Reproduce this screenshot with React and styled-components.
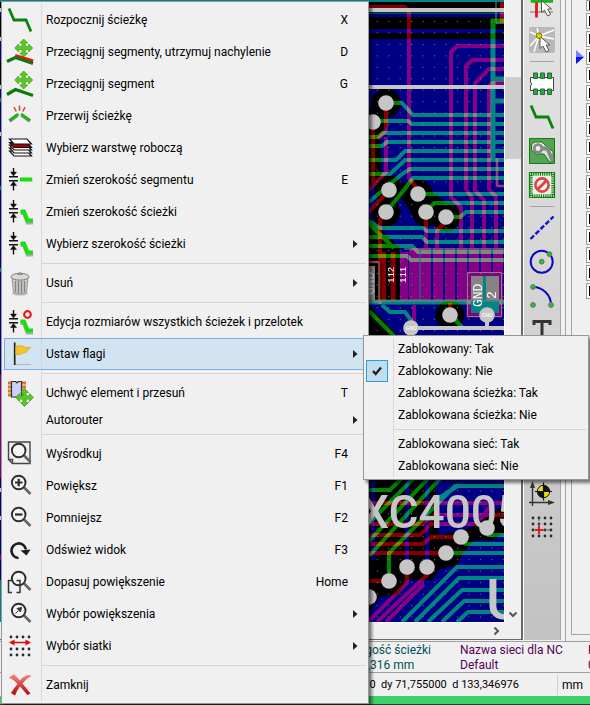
import React from "react";
import styled, { createGlobalStyle } from "styled-components";

const GlobalStyle = createGlobalStyle`
  * { box-sizing: border-box; }
  body { margin: 0; background: #f0f0f0; }
  button { font: inherit; color: inherit; border: 0; background: none; padding: 0; text-align: left; }
  svg { display: block; flex: none; }
`;

const Window = styled.div`
  position: relative;
  display: flex;
  flex-direction: column;
  min-height: 100vh;
  overflow: hidden;
  background: #f0f0f0;
  color: #000;
  font: 12px/16px Roboto, "Open Sans", sans-serif;
`;

const Workspace = styled.main`
  flex: 1;
  display: flex;
  min-height: 0;
`;

const CanvasFrame = styled.section`
  flex: 1;
  min-width: 0;
  display: grid;
  grid-template-columns: 1fr 17px;
  grid-template-rows: 1fr 17px;
  border-right: 2px solid #696969;
  border-bottom: 1px solid #696969;
  margin-bottom: 1px;
`;

const BoardArea = styled.div`
  min-width: 0;
  min-height: 0;
  overflow: hidden;
  contain: size;
  background: #000084;
  svg { width: 100%; height: 100%; isolation: isolate; }
`;

const CopperLayer = styled.g`
  fill: none;
  stroke: ${(p) => p.$color};
  stroke-width: 4;
  mix-blend-mode: lighten;
`;

const Silk = styled.text`
  fill: ${(p) => p.$color || "#c6c6c6"};
  font-family: ${(p) => (p.$large ? 'Roboto, "Liberation Sans", sans-serif' : '"Liberation Mono", monospace')};
  font-weight: ${(p) => (p.$large ? 500 : 400)};
  font-size: ${(p) => p.$size}px;
`;

const ScrollTrack = styled.div`
  display: flex;
  flex-direction: ${(p) => (p.$vertical ? "column" : "row")};
  justify-content: flex-end;
  background: #f0f0f0;
  border-left: ${(p) => (p.$vertical ? "1px solid #fff" : "0")};
  border-top: ${(p) => (p.$vertical ? "0" : "1px solid #fff")};
`;

const ScrollThumb = styled.div`
  height: 82px;
  margin: 77px 0 auto;
  background: #cdcdcd;
`;

const ScrollButton = styled.button`
  display: grid;
  place-items: center;
  width: 16px;
  height: 16px;
`;

const ToolColumn = styled.nav`
  width: 38px;
  overflow: hidden;
  contain: size;
  border-left: 1px solid #fff;
  border-right: 1px solid #a8a8a8;
  background: linear-gradient(#e4e4e4, #c2c2c2);
  margin-bottom: 1px;
`;

const ToolList = styled.div`
  display: flex;
  flex-direction: column;
  align-items: center;
  margin-top: -11px;
`;

const ToolButton = styled.button`
  display: grid;
  place-items: center;
  width: 36px;
  height: 34px;
`;

const ToolRule = styled.hr`
  width: 24px;
  height: 1px;
  margin: 4px 0;
  border: 0;
  background: #a3a3a3;
`;

const LayerDock = styled.aside`
  width: 25px;
  padding: 0 0 6px 5px;
  margin-left: 4px;
  border-left: 1px solid #a5a5a5;
  display: flex;
  overflow: hidden;
  contain: size;
`;

const LayerList = styled.div`
  flex: 1;
  display: flex;
  flex-direction: column;
  gap: 2px;
  border: solid #a5a5a5;
  border-width: 0 0 1px 1px;
`;

const LayerRow = styled.div`
  display: flex;
  justify-content: flex-end;
  align-items: center;
  height: ${(p) => (p.$clipped ? 11 : 16)}px;
`;

const LayerSwatch = styled.button`
  width: 4px;
  height: 100%;
  margin-left: 2px;
  border: solid #9c9c9c;
  border-width: 1px 0 1px 1px;
  background: linear-gradient(#000, #000) 2px 50% / 2px 10px no-repeat #fff;
`;

const MessagePanel = styled.section`
  display: grid;
  grid-template-columns: 1fr 128px 2px;
  height: 31px;
  padding-top: 1px;
  border-top: 1px solid #a0a0a0;
  overflow: hidden;
  line-height: 15px;
  white-space: nowrap;
`;

const Message = styled.div`
  color: ${(p) => p.$color};
  justify-self: ${(p) => (p.$end ? "end" : "start")};
  margin-right: ${(p) => (p.$end ? 29 : 0)}px;
`;

const StatusBar = styled.footer`
  display: flex;
  align-items: center;
  height: 24px;
  border-top: 1px solid #a0a0a0;
  white-space: pre;
`;

const Coordinates = styled.div`
  flex: 1;
  font-size: 11px;
  text-align: right;
  padding-right: 38px;
`;

const Units = styled.div`
  width: 33px;
  padding-left: 4px;
  line-height: 20px;
  border-left: 1px solid #d0d0d0;
`;

const WindowEdge = styled.div`
  height: 9px;
  background: #3dd168;
  border-bottom: 1px solid #10492a;
`;

const MenuBox = styled.div`
  position: absolute;
  display: flex;
  flex-direction: column;
  padding: 2px;
  border: 1px solid #979797;
  background: linear-gradient(#d9d9d9, #d9d9d9) ${(p) => p.$rule}px 2px / 1px calc(100% - 4px) no-repeat #f0f0f0;
  box-shadow: 3px 3px 3px rgba(0, 0, 0, 0.5);
  white-space: nowrap;
`;

const ContextMenu = styled(MenuBox)`
  left: 1px;
  top: 1px;
  min-width: 368px;
`;

const SubMenu = styled(MenuBox)`
  left: calc(100% - 3px);
  top: -3px;
  min-width: 226px;
`;

const ItemSlot = styled.div`
  position: relative;
`;

const MenuItem = styled.button`
  display: flex;
  align-items: center;
  width: 100%;
  height: ${(p) => (p.$compact ? 22 : 32)}px;
  padding-right: 8px;
  background: ${(p) => (p.$active ? "rgba(180, 215, 243, 0.5)" : "transparent")};
  box-shadow: ${(p) => (p.$active ? "inset 0 0 0 1px #78aee5" : "none")};
`;

const IconCell = styled.span`
  flex: none;
  width: 42px;
  padding-left: 2px;
`;

const ItemLabel = styled.span`
  flex: 1;
`;

const Shortcut = styled.span`
  margin-right: 10px;
`;

const CheckCell = styled.span`
  flex: none;
  display: grid;
  place-items: center;
  width: 22px;
  height: 22px;
  margin-right: 10px;
  border: ${(p) => (p.$checked ? "1px solid #26a0da" : "0")};
  background: ${(p) => (p.$checked ? "#c0dded" : "none")};
`;

const MenuRule = styled.hr`
  height: 1px;
  margin: 3px 0 3px ${(p) => p.$inset}px;
  border: 0;
  background: #d4d4d4;
`;

const Icon = ({ children }) => (
  <svg width="28" height="28" viewBox="0 0 28 28" fill="none" aria-hidden="true">
    {children}
  </svg>
);

const MoveCross = ({ x, y }) => (
  <g transform={`translate(${x} ${y})`}>
    <path
      d="M0-9 4-5H1.600V-1.600H5V-4L9 0 5 4V1.600H1.600V5H4L0 9-4 5H-1.600V1.600H-5V4L-9 0-5-4V-1.600H-1.600V-5H-4Z"
      fill="#55cc22"
      stroke="#3e9a1c"
      strokeWidth=".7"
    />
  </g>
);

const WidthMark = () => (
  <g stroke="#111" strokeWidth="1.400">
    <path d="M3 10.700H12M3 14.700H12M7.500 2V8M7.500 17V24.500" />
    <path d="M4.500 6H10.500L7.500 10ZM4.500 19.500H10.500L7.500 15.500Z" fill="#111" strokeWidth=".5" />
  </g>
);

const BentTrack = () => (
  <>
    <path d="M14.500 15H18L21.500 24.500H27" stroke="#aaa" strokeWidth="4" />
    <path d="M14.500 13.500H18L21.500 22.500H27" stroke="#18e010" strokeWidth="4" />
  </>
);

const Lens = ({ y = 10.5 }) => (
  <>
    <path d={`M18 ${y + 5} 24.500 ${y + 11.5}`} stroke="#666" strokeWidth="2.600" />
    <circle cx="12.700" cy={y} r="6.800" stroke="#2c2c2c" strokeWidth="1.900" fill="#f4f4f4" />
  </>
);

const Dots = ({ rows }) => (
  <path
    d={rows.map((y) => `M5 ${y}h0M11 ${y}h0M17 ${y}h0M23 ${y}h0`).join("")}
    stroke="#2b2b2b"
    strokeWidth="2.800"
    strokeLinecap="round"
  />
);

const Pointer = ({ x, y }) => (
  <path transform={`translate(${x} ${y})`} d="M0 0V12L3 9.500 6 15.500 9 14 6.200 8.500H10Z" fill="#fff" stroke="#555" />
);

const icons = {
  track: <path d="M3 2.500 8 14H20L25 25.500" stroke="#0b820b" strokeWidth="2.800" />,
  dragSlope: (
    <>
      <MoveCross x={17.7} y={10} />
      <path d="M9 18 27 23.500" stroke="#f5101a" strokeWidth="4" />
      <path d="M1 23.500 9.500 19.500 27 25.500" stroke="#0a7a0a" strokeWidth="3.200" />
    </>
  ),
  drag: (
    <>
      <MoveCross x={17.7} y={10} />
      <path d="M1 24.500 9.500 19.500 27 25.500" stroke="#0a7a0a" strokeWidth="3.200" />
    </>
  ),
  breakTrack: (
    <>
      <path d="M3.500 19 11.500 13M24 19 15.500 13" stroke="#888" strokeWidth="3.600" />
      <path d="M3.500 18.500 12.500 12M24 18.500 15 12" stroke="#12bb12" strokeWidth="2.600" />
      <path d="M13.500 3.500V8.700M8 5 10.200 9.500M19 5 16.800 9.500" stroke="#d04848" strokeWidth="1.600" />
    </>
  ),
  layers: (
    <g stroke="#111" strokeWidth="1.200">
      {[17, 14, 11].map((y) => (
        <path key={y} d={`M3.500 ${y}H21L25.500 ${y + 5}H8Z`} fill="#fff" />
      ))}
      <path d="M3.500 8.500H21L25.500 13.500H8Z" fill="#a80000" />
      <path d="M3.500 5H21L25.500 10H8Z" fill="#fff" />
    </g>
  ),
  segmentWidth: (
    <>
      <WidthMark />
      <path d="M14 13.500H26.300" stroke="#18e010" strokeWidth="4" />
    </>
  ),
  trackWidth: (
    <>
      <WidthMark />
      <BentTrack />
    </>
  ),
  trash: (
    <>
      <ellipse cx="14" cy="24.500" rx="8" ry="2" fill="#bbb" />
      <path d="M6 9 7.500 23.500Q14 26.500 20.500 23.500L22 9Z" fill="#c9c9c4" stroke="#8c8c88" strokeWidth=".8" />
      <path d="M9.500 12V23M12.500 12V24M15.500 12V24M18.500 12V23" stroke="#83837f" strokeWidth="1.300" />
      <ellipse cx="14" cy="7.700" rx="9" ry="3.400" fill="#d8d8d4" stroke="#80807c" />
      <path d="M11.500 5.500Q14 1.500 16.500 5.500Z" fill="#aaa" stroke="#777" strokeWidth=".7" />
    </>
  ),
  editAll: (
    <>
      <WidthMark />
      <BentTrack />
      <circle cx="21.500" cy="6.500" r="3.300" stroke="#f01414" strokeWidth="2.200" fill="#fff" />
    </>
  ),
  flag: (
    <>
      <path d="M9 24.500H25" stroke="#b5bcc4" strokeWidth="1.200" />
      <path d="M8.700 2.500V25" stroke="#222" strokeWidth="1.700" />
      <path d="M9.700 6.500Q13 4.500 17 6.500T24.700 7.500Q22 9 20 12.500 17 12 15 14 12 15 9.700 14.500Z" fill="#f2c52c" stroke="#d0a018" strokeWidth=".7" />
    </>
  ),
  moveChip: (
    <>
      <path d="M2 4H20M2 8H20M2 12H20M2 16H20" stroke="#d87920" strokeWidth="3" />
      <path d="M5.500 2.500H9.500L11 4 12.500 2.500H15.500V18H5.500Z" fill="#cdd0ff" stroke="#333" strokeWidth="1.200" />
      <MoveCross x={18.5} y={18.5} />
    </>
  ),
  center: (
    <>
      <path d="M2.500 2H24V23.500H6.500L2.500 19.500ZM2.500 19.500H6.500V23.500" stroke="#444" strokeWidth="1.400" />
      <Lens />
    </>
  ),
  zoomIn: (
    <>
      <Lens />
      <path d="M9 10.500H16.500M12.700 6.700V14.300" stroke="#2c2c2c" strokeWidth="2.200" />
    </>
  ),
  zoomOut: (
    <>
      <Lens />
      <path d="M9 10.500H16.500" stroke="#2c2c2c" strokeWidth="2.200" />
    </>
  ),
  refresh: (
    <>
      <path d="M12.500 22A7.300 7.300 0 1 1 20 13.500" stroke="#1c1c1c" strokeWidth="2.600" />
      <path d="M14.500 14.500 24.500 13.500 20.500 19.500Z" fill="#1c1c1c" />
    </>
  ),
  fit: (
    <>
      <Lens />
      <path d="M6 12.500H2.500V24.500H6M10.500 12.500H14V24.500H10.500" stroke="#333" strokeWidth="1.500" />
    </>
  ),
  zoomPick: (
    <>
      <Lens />
      <path d="M9.500 13.500 12 11M11 8.500 15.500 7.500 14.500 12Z" fill="#333" stroke="#333" />
    </>
  ),
  gridPick: (
    <>
      <Dots rows={[5, 17, 23]} />
      <path d="M6 10.500H22" stroke="#e00808" strokeWidth="1.500" />
      <path d="M3 10.500 8.500 7.500V13.500ZM25 10.500 19.500 7.500V13.500Z" fill="#e00808" />
    </>
  ),
  close: (
    <>
      <defs>
        <linearGradient id="closeRed" x1="0" y1="0" x2="0" y2="1">
          <stop offset="0" stopColor="#f28d84" />
          <stop offset="1" stopColor="#b00505" />
        </linearGradient>
      </defs>
      <path d="M3 6.500 8 3 14 9.500Q18 4 23.500 4L25.500 5Q20 7.500 16.500 12.500L24.500 22.500 21.500 24 14 15.500Q10.500 20 9 24.500L5 22Q8 17 11.500 13Q8 8.500 3 6.500Z" fill="url(#closeRed)" />
    </>
  ),
  select: (
    <>
      <path d="M2.700 9H25" stroke="#15b515" strokeWidth="3.500" />
      <path d="M2 20H25" stroke="#aaa" strokeWidth="2" />
      <path d="M8.500 10V25.500" stroke="#e01818" strokeWidth="2.800" />
      <Pointer x={13.5} y={8.5} />
    </>
  ),
  highlightNet: (
    <>
      <rect x="1" y="1" width="26" height="26" rx="2" fill="#b9b9b9" />
      <path d="M11 10 2 6M11 10 6 26M11 10 26 4M11 10 26 13M11 10 2 20M11 10 9 2" stroke="#fff" strokeWidth="1.400" />
      <Pointer x={12} y={10.5} />
      <circle cx="11" cy="9.700" r="2.800" fill="#d5d500" stroke="#777700" />
    </>
  ),
  module: (
    <>
      <path d="M2.500 8.500H25.500V21.500H2.500V17Q5 15.500 2.500 13Z" fill="#fff" stroke="#444" />
      <path
        d="M5.500 4h4v5.500h-4ZM12.500 4h4v5.500h-4ZM19.500 4h4v5.500h-4ZM5.500 20h4v5.500h-4ZM12.500 20h4v5.500h-4ZM19.500 20h4v5.500h-4Z"
        fill="#19b832"
        stroke="#3a5c40"
      />
    </>
  ),
  zone: (
    <>
      <path d="M1.500 1.500H26.500V26.500H1.500Z" fill="#52a552" stroke="#157a15" />
      <path d="M6 5H14L18 9 25 14.500V24L22 25.500 16 17H8L3.500 13V8Z" fill="#d5e8d5" stroke="#157a15" />
      <path d="M11 11.500H19.500L24.500 24" stroke="#888" strokeWidth="3.800" />
      <circle cx="10" cy="11.500" r="3.800" stroke="#888" strokeWidth="2.800" fill="#eee" />
    </>
  ),
  keepout: (
    <>
      <path d="M3 3H25V25H3Z" stroke="#0a850a" strokeWidth="3.500" strokeDasharray="1.200 1" fill="#eee" />
      <path d="M1.500 1.500H26.500V26.500H1.500Z" stroke="#0a850a" strokeWidth="1.200" />
      <circle cx="14" cy="14" r="6.600" stroke="#dd4444" strokeWidth="2.600" fill="#f2f2f2" />
      <path d="M9.500 18.500 18.500 9.500" stroke="#dd4444" strokeWidth="3" />
    </>
  ),
  line: <path d="M2.500 25 25.500 2.500" stroke="#1212cc" strokeWidth="2.400" strokeDasharray="5 2" />,
  circle: (
    <>
      <circle cx="13.700" cy="13.700" r="11" stroke="#0808c0" strokeWidth="2" />
      <g fill="#2fb83f" stroke="#55805a">
        <circle cx="13.700" cy="13.700" r="2.400" />
        <circle cx="21.500" cy="6.200" r="2.400" />
      </g>
    </>
  ),
  arc: (
    <>
      <path d="M5 5A18 18 0 0 1 23 23" stroke="#0808c0" strokeWidth="2" />
      <g fill="#2fb83f" stroke="#55805a">
        <circle cx="5" cy="5" r="2.400" />
        <circle cx="5" cy="23" r="2.400" />
        <circle cx="23" cy="23" r="2.400" />
      </g>
    </>
  ),
  text: <path d="M6 9V5.500H22V9M14 5.500V24M10 24H18" stroke="#333" strokeWidth="3" />,
  target: (
    <>
      <path d="M4.500 27V5M1 23.500H24" stroke="#333" strokeWidth="1.400" />
      <path d="M2 9 4.500 2 7 9ZM20 21 27 23.500 20 26Z" fill="#333" />
      <circle cx="15.500" cy="12.500" r="6.200" fill="#e8e000" stroke="#111" />
      <path d="M15.500 12.500V6.300A6.200 6.200 0 0 1 21.700 12.500H9.300A6.200 6.200 0 0 0 15.500 18.700Z" fill="#111" />
      <path d="M15.500 3.500V21.500M7 12.500H24" stroke="#111" strokeWidth="1.200" />
    </>
  ),
  gridOrigin: (
    <>
      <Dots rows={[5, 11, 17, 23]} />
      <path d="M11 5V17H23" stroke="#555" strokeDasharray="3 2" />
      <path d="M7 17H15M11 13V21" stroke="#e01c1c" strokeWidth="2" />
    </>
  ),
};

const RING_VIAS = [
  [386, 103], [373, 122], [389, 190], [418, 194], [386, 212], [426, 212], [446, 217], [450, 315],
];
const PLAIN_VIAS = [
  [411, 328], [487, 315], [389, 581], [407, 567], [427, 567], [446, 553], [461, 537], [487, 528], [369, 597],
];

const Board = () => (
  <svg viewBox="0 0 504 622" preserveAspectRatio="xMaxYMin slice" role="img" aria-label="PCB">
    <defs>
      <pattern id="gridDots" width="11.450" height="11.450" patternUnits="userSpaceOnUse" x="376.800" y="21">
        <rect width="1" height="1" fill="#848484" />
      </pattern>
    </defs>
    <rect width="504" height="622" fill="#000084" />
    <g fill="#000">
      <path d="M0 2H504V13H0ZM0 17H504V29H0ZM0 33H504V39H0Z" />
      <path d="M0 20H2V36H0ZM0 60H2V84H0ZM369 135H380L382 175 369 190ZM369 218 400 248V300H369ZM369 305 402 340H369Z" />
      <path d="M369 470H436V525L440 535 470 528 504 505V532L493 540H474L463 553 457 565 440 569 432 580H407L397 595 380 597 369 612Z" />
      {RING_VIAS.map(([x, y]) => (
        <circle key={`${x}-${y}`} cx={x} cy={y} r="14.500" />
      ))}
      <path d="M392 185 418 180 446 203 440 225 418 222Z" />
    </g>

    <CopperLayer $color="#840000">
      <path d="M369 7H405L409 11V178L418 190" />
      <path d="M504 46H457L451 52V197L461 207V248" />
      <path d="M504 60H472L466 66V189L472 198V248" />
      <path d="M504 69H489L475 83V190L484 200V248" />
      <path d="M504 83H492L489 86V189L496 197V248M502 0V22" />
      <path d="M386 103V130L378 139M373 122V186M386 137V172L369 190" />
      <path d="M369 212 389 190M386 212 380 220V262M426 212V248M446 222 437 230V248M414 305V328M450 303V312" />
      <path d="M414 248V300M426 248V300M438 248V300M450 248V300M462 248V300M474 248V300M486 248V300M498 248V300" strokeWidth="10" />
      <path d="M404 252V300" strokeWidth="8" />
      <path d="M393 252V300" strokeWidth="5" />
      <path d="M384 252V300" strokeWidth="4" />
      <path d="M369 262H380V304M497 158V186H504" strokeWidth="3" />
      <path d="M467 272H502V317H467Z" fill="#840000" strokeWidth="1" />
      <path d="M369 503H504M369 524H422L434 515H504M369 535H420L431 524H480M369 544H423L431 537H461M369 553H446M369 581H389" />
      <path d="M369 621 407 583V567M377 622 427 575V567M386 622 424 584M480 520 492 503H504" />
    </CopperLayer>

    <CopperLayer $color="#008400">
      <path d="M369 13H504" strokeWidth="1" />
      <path d="M493 158V21H504M493 79H504M493 101H504" strokeWidth="5" />
      <path d="M386 103H402L413 115H504M373 121H408L412 124H504" />
      <path d="M369 137H378L383 133H504M369 146H382L387 142H504" />
      <path d="M369 160H396L405 151H504M369 174H390L405 160H504M369 202 402 174 410 169H504M386 212 404 190 413 178H504" />
      <path d="M418 194H504M426 212 434 203H504M446 217H460L466 212H504" />
      <path d="M369 221 379 228H423L427 231H504M369 237H422L427 242H504M369 246H412L418 252H504" />
      <path d="M369 256H407L411 260H504" />
      <path d="M369 302H504" strokeWidth="5" />
      <path d="M382 305 390 312H405L411 320V328M450 315 462 327M369 311 398 340M369 224 394 248" />
      <path d="M369 490H390L410 470M369 541 436 470M369 556 448 470M389 581V553L455 486H504M369 523 422 470M436 500 459 485" />
      <path d="M446 553H504M461 541 466 544H504M487 535H504" />
      <path d="M402 622 457 567H504M415 622 459 578H504M428 622 462 590H504M442 622 464 601H504M457 622 468 612H504" />
    </CopperLayer>

    <CopperLayer $color="#000084">
      <path d="M407 470V560M427 470V560M373 470V560" />
    </CopperLayer>

    <path d="M369 266H375V300H369ZM471 276H499V300H471Z" fill="#848484" />
    <path d="M471 300H499V313H471ZM483 276H486V300H483Z" fill="#008484" />
    <g stroke="#848484" fill="none">
      <path d="M369 262H379V302H369M467.500 272.500H501.500V316.500H467.500ZM497 158V186H504M496 0V23H504M404 249H504M420 249V301M369 301H504" />
    </g>
    <path d="M0 1H504" stroke="#008484" strokeWidth="2" />
    <path d="M0 100H2M0 188H2M0 270H2" stroke="#008484" strokeWidth="4" />
    <path d="M1 375V478M1 555V560" stroke="#840084" strokeWidth="2" />
    <path d="M1 580V622" stroke="#008484" strokeWidth="2" />
    <rect x="369" width="135" height="622" fill="url(#gridDots)" />
    <g stroke="#c6c6c6" strokeWidth="4">
      <path d="M0 10H504M0 87H504M411 328H504M487 315V328" />
      <path d="M0 39H2M0 134H2M0 490H2M0 518H2" />
    </g>
    <g fill="#c6c6c6">
      {[...RING_VIAS, ...PLAIN_VIAS].map(([x, y]) => (
        <circle key={`${x}-${y}`} cx={x} cy={y} r="7.800" />
      ))}
    </g>
    <Silk $large $size={46} x="360" y="528">XC4005</Silk>
    <Silk $large $size={56} x="486" y="619">U</Silk>
    <Silk $size={13} $color="#fff" x="482" y="307" transform="rotate(-90 482 307)">GND</Silk>
    <Silk $size={13} $color="#fff" x="496" y="299" transform="rotate(-90 496 299)">2</Silk>
    <Silk $size={13} x="374" y="295" transform="rotate(-90 374 295)">GND</Silk>
    <Silk $size={9} $color="#fff" x="394" y="283" transform="rotate(-90 394 283)">112</Silk>
    <Silk $size={9} $color="#fff" x="406" y="283" transform="rotate(-90 406 283)">111</Silk>
    <Silk $size={6} $color="#fff" x="406" y="330">GND</Silk>
    <Silk $size={6} $color="#fff" x="482" y="317">GND</Silk>
  </svg>
);

const MENU = [
  { icon: "track", label: "Rozpocznij ścieżkę", key: "X" },
  { icon: "dragSlope", label: "Przeciągnij segmenty, utrzymuj nachylenie", key: "D" },
  { icon: "drag", label: "Przeciągnij segment", key: "G" },
  { icon: "breakTrack", label: "Przerwij ścieżkę" },
  { icon: "layers", label: "Wybierz warstwę roboczą" },
  { icon: "segmentWidth", label: "Zmień szerokość segmentu", key: "E" },
  { icon: "trackWidth", label: "Zmień szerokość ścieżki" },
  { icon: "trackWidth", label: "Wybierz szerokość ścieżki", sub: true },
  null,
  { icon: "trash", label: "Usuń", sub: true },
  null,
  { icon: "editAll", label: "Edycja rozmiarów wszystkich ścieżek i przelotek" },
  { icon: "flag", label: "Ustaw flagi", sub: true, open: true },
  null,
  { icon: "moveChip", label: "Uchwyć element i przesuń", key: "T" },
  { label: "Autorouter", sub: true },
  null,
  { icon: "center", label: "Wyśrodkuj", key: "F4" },
  { icon: "zoomIn", label: "Powiększ", key: "F1" },
  { icon: "zoomOut", label: "Pomniejsz", key: "F2" },
  { icon: "refresh", label: "Odśwież widok", key: "F3" },
  { icon: "fit", label: "Dopasuj powiększenie", key: "Home" },
  { icon: "zoomPick", label: "Wybór powiększenia", sub: true },
  { icon: "gridPick", label: "Wybór siatki", sub: true },
  null,
  { icon: "close", label: "Zamknij" },
];

const FLAGS = [
  { label: "Zablokowany: Tak" },
  { label: "Zablokowany: Nie", checked: true },
  { label: "Zablokowana ścieżka: Tak" },
  { label: "Zablokowana ścieżka: Nie" },
  null,
  { label: "Zablokowana sieć: Tak" },
  { label: "Zablokowana sieć: Nie" },
];

const TOOLS = [
  ["select", "Wybierz"],
  ["highlightNet", "Podświetl sieć"],
  null,
  ["module", "Dodaj footprint"],
  ["track", "Dodaj ścieżkę"],
  ["zone", "Dodaj strefę"],
  ["keepout", "Dodaj obszar chroniony"],
  null,
  ["line", "Dodaj linię"],
  ["circle", "Dodaj okrąg"],
  ["arc", "Dodaj łuk"],
  ["text", "Dodaj tekst"],
  ["line", "Dodaj wymiar"],
  null,
  ["target", "Dodaj znacznik"],
  null,
  ["close", "Usuń element"],
  null,
  ["target", "Punkt bazowy"],
  ["gridOrigin", "Początek siatki"],
];

const FlagsMenu = () => (
  <SubMenu role="menu" $rule={29}>
    {FLAGS.map((flag, i) =>
      flag ? (
        <MenuItem key={i} role="menuitemcheckbox" aria-checked={!!flag.checked} $compact>
          <CheckCell $checked={flag.checked}>
            {flag.checked && (
              <svg width="12" height="12" viewBox="0 0 12 12" fill="none">
                <path d="M2 6 4.700 9 10 2.500" stroke="#222" strokeWidth="2.400" />
              </svg>
            )}
          </CheckCell>
          <ItemLabel>{flag.label}</ItemLabel>
        </MenuItem>
      ) : (
        <MenuRule key={i} $inset={28} />
      )
    )}
  </SubMenu>
);

export default function App() {
  return (
    <>
      <GlobalStyle />
      <Window>
        <Workspace>
          <CanvasFrame>
            <BoardArea>
              <Board />
            </BoardArea>
            <ScrollTrack $vertical>
              <ScrollThumb />
              <ScrollButton aria-label="W dół">
                <svg width="10" height="7" viewBox="0 0 10 7" fill="none">
                  <path d="M1.500 1.500 5 5 8.500 1.500" stroke="#555" strokeWidth="2" />
                </svg>
              </ScrollButton>
            </ScrollTrack>
            <ScrollTrack>
              <ScrollButton aria-label="W prawo">
                <svg width="7" height="10" viewBox="0 0 7 10" fill="none">
                  <path d="M1.500 1.500 5 5 1.500 8.500" stroke="#555" strokeWidth="2" />
                </svg>
              </ScrollButton>
            </ScrollTrack>
          </CanvasFrame>
          <ToolColumn aria-label="Narzędzia">
            <ToolList>
              {TOOLS.map((tool, i) =>
                tool ? (
                  <ToolButton key={i} aria-label={tool[1]}>
                    <Icon>{icons[tool[0]]}</Icon>
                  </ToolButton>
                ) : (
                  <ToolRule key={i} />
                )
              )}
            </ToolList>
          </ToolColumn>
          <LayerDock>
            <LayerList>
              {Array.from({ length: 17 }, (_, i) => (
                <LayerRow key={i} $clipped={i === 0}>
                  {i === 3 && (
                    <svg width="8" height="14" viewBox="0 0 8 14">
                      <path d="M0 0 8 7H0Z" fill="#7f7ff5" />
                      <path d="M0 14 8 7H0Z" fill="#1010ee" />
                    </svg>
                  )}
                  <LayerSwatch aria-label={`Warstwa ${i + 1}`} />
                </LayerRow>
              ))}
            </LayerList>
          </LayerDock>
        </Workspace>

        <MessagePanel>
          <Message $color="#005058" $end>
            Długość ścieżki
            <br />
            123,316 mm
          </Message>
          <Message $color="#580058">
            Nazwa sieci dla NC
            <br />
            Default
          </Message>
          <Message $color="#580058">
            K<br />0
          </Message>
        </MessagePanel>
        <StatusBar>
          <Coordinates>{"dx 0,000000  dy 71,755000  d 133,346976"}</Coordinates>
          <Units>mm</Units>
        </StatusBar>
        <WindowEdge />

        <ContextMenu role="menu" $rule={39}>
          {MENU.map((item, i) =>
            item ? (
              <ItemSlot key={i}>
                <MenuItem role="menuitem" $compact={!item.icon} $active={item.open}>
                  <IconCell>{item.icon && <Icon>{icons[item.icon]}</Icon>}</IconCell>
                  <ItemLabel>{item.label}</ItemLabel>
                  {item.key && <Shortcut>{item.key}</Shortcut>}
                  {item.sub && (
                    <svg width="5" height="8" viewBox="0 0 5 8">
                      <path d="M0 0 4.500 4 0 8Z" fill="#222" />
                    </svg>
                  )}
                </MenuItem>
                {item.open && <FlagsMenu />}
              </ItemSlot>
            ) : (
              <MenuRule key={i} $inset={38} />
            )
          )}
        </ContextMenu>
      </Window>
    </>
  );
}
